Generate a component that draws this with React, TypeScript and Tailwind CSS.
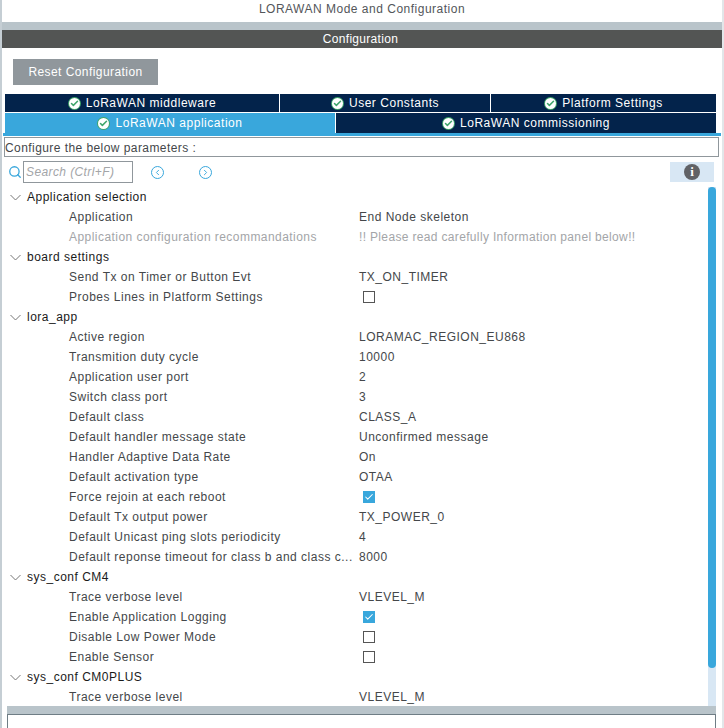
import { Check, ChevronLeft, ChevronRight, Search } from "lucide-react";

type Row =
  | { kind: "group"; label: string }
  | { kind: "text"; label: string; value: string; muted?: boolean }
  | { kind: "check"; label: string; checked: boolean };

const ROWS: Row[] = [
  { kind: "group", label: "Application selection" },
  { kind: "text", label: "Application", value: "End Node skeleton" },
  { kind: "text", label: "Application configuration recommandations", value: "!! Please read carefully Information panel below!!", muted: true },
  { kind: "group", label: "board settings" },
  { kind: "text", label: "Send Tx on Timer or Button Evt", value: "TX_ON_TIMER" },
  { kind: "check", label: "Probes Lines in Platform Settings", checked: false },
  { kind: "group", label: "lora_app" },
  { kind: "text", label: "Active region", value: "LORAMAC_REGION_EU868" },
  { kind: "text", label: "Transmition duty cycle", value: "10000" },
  { kind: "text", label: "Application user port", value: "2" },
  { kind: "text", label: "Switch class port", value: "3" },
  { kind: "text", label: "Default class", value: "CLASS_A" },
  { kind: "text", label: "Default handler message state", value: "Unconfirmed message" },
  { kind: "text", label: "Handler Adaptive Data Rate", value: "On" },
  { kind: "text", label: "Default activation type", value: "OTAA" },
  { kind: "check", label: "Force rejoin at each reboot", checked: true },
  { kind: "text", label: "Default Tx output power", value: "TX_POWER_0" },
  { kind: "text", label: "Default Unicast ping slots periodicity", value: "4" },
  { kind: "text", label: "Default reponse timeout for class b and class c...", value: "8000" },
  { kind: "group", label: "sys_conf CM4" },
  { kind: "text", label: "Trace verbose level", value: "VLEVEL_M" },
  { kind: "check", label: "Enable Application Logging", checked: true },
  { kind: "check", label: "Disable Low Power Mode", checked: false },
  { kind: "check", label: "Enable Sensor", checked: false },
  { kind: "group", label: "sys_conf CM0PLUS" },
  { kind: "text", label: "Trace verbose level", value: "VLEVEL_M" },
];

function OkBadge() {
  return (
    <span className="w-[13px] h-[13px] rounded-full bg-[#3fa66b] flex items-center justify-center shrink-0">
      <span className="w-[11px] h-[11px] rounded-full bg-white flex items-center justify-center">
        <Check className="w-[9px] h-[9px] text-[#3fa66b]" strokeWidth={4} />
      </span>
    </span>
  );
}

function Tab({ label, width, active }: { label: string; width: string; active?: boolean }) {
  return (
    <div className={`${width} h-full flex items-center justify-center gap-[5px] text-white tracking-[0.53px] ${active ? "bg-[#39a7dc]" : "bg-[#03234b]"}`}>
      <OkBadge />
      <span>{label}</span>
    </div>
  );
}

function Box({ checked }: { checked: boolean }) {
  if (checked) {
    return (
      <span className="ml-[4px] w-[12px] h-[12px] bg-[#39a7dc] flex items-center justify-center">
        <Check className="w-[10px] h-[10px] text-white" strokeWidth={2.5} />
      </span>
    );
  }
  return <span className="ml-[4px] w-[12px] h-[12px] border border-[#555]" />;
}

function ParamRow({ row }: { row: Row }) {
  if (row.kind === "group") {
    return (
      <div className="h-[20px] flex items-center text-[#1a1a1a]">
        <svg className="ml-[8px] w-[11px] h-[7px]" viewBox="0 0 11 7" fill="none" stroke="#777" strokeWidth="1">
          <polyline points="0.5,1 5.5,6 10.5,1" />
        </svg>
        <span className="ml-[6px] pb-[1px]">{row.label}</span>
      </div>
    );
  }
  const muted = row.kind === "text" && row.muted;
  return (
    <div className={`h-[20px] flex items-center ${muted ? "text-[#a3a5a8]" : "text-[#44474a]"}`}>
      <span className={`ml-[67px] w-[290px] shrink-0 whitespace-nowrap pb-[1px] ${muted ? "tracking-[0.45px]" : ""}`}>{row.label}</span>
      {row.kind === "text" ? (
        <span className={`pb-[1px] ${muted ? "tracking-[0.34px]" : ""}`}>{row.value}</span>
      ) : (
        <Box checked={row.checked} />
      )}
    </div>
  );
}

export default function App() {
  return (
    <div className="relative w-[724px] h-[728px] overflow-hidden bg-white flex flex-col text-[12px] tracking-[0.5px] border-l-2 border-l-[#c5ced4] border-r-2 border-r-[#e2e6e9] box-border" style={{ fontFamily: '"Liberation Sans", Arial, sans-serif' }}>
      <div className="h-[22px] shrink-0 flex items-center justify-center text-[#53565a] pb-[6px] pt-[2px]">LORAWAN Mode and Configuration</div>
      <div className="h-[8px] shrink-0 bg-[#b9c4ca]" />
      <div className="h-[18px] shrink-0 bg-[#535554] text-white flex items-center justify-center pr-[3px] tracking-[0.3px]">Configuration</div>

      <div className="mt-[11px] ml-[11px] w-[145px] h-[26px] shrink-0 bg-[#90979c] text-white flex items-center justify-center tracking-[0.43px]">Reset Configuration</div>

      <div className="mt-[9px] ml-[3px] w-[711px] h-[18px] shrink-0 flex gap-[1px]">
        <Tab label="LoRaWAN middleware" width="w-[274px]" />
        <Tab label="User Constants" width="w-[210px]" />
        <Tab label="Platform Settings" width="w-[225px]" />
      </div>
      <div className="mt-[1px] ml-[3px] w-[711px] h-[20px] shrink-0 flex gap-[1px]">
        <Tab label="LoRaWAN application" width="w-[330px]" active />
        <Tab label="LoRaWAN commissioning" width="w-[380px]" />
      </div>
      <div className="ml-[1px] w-[718px] h-[3px] shrink-0 bg-[#39a7dc]" />

      <div className="mt-[1px] ml-[2px] w-[715px] h-[20px] shrink-0 border border-[#90979c] flex items-center pt-[1px] text-[#44474a] tracking-[0.43px]">Configure the below parameters :</div>

      <div className="mt-[4px] h-[22px] shrink-0 flex items-center">
        <Search className="ml-[6px] w-[14px] h-[14px] text-[#39a7dc]" strokeWidth={2.25} />
        <div className="ml-[1px] w-[110px] h-[22px] border border-[#90979c] flex items-center pl-[2px] italic text-[#a3a5a8] tracking-[0.4px]">Search (Ctrl+F)</div>
        <span className="ml-[18px] w-[13px] h-[13px] rounded-full border border-[#39a7dc] flex items-center justify-center">
          <ChevronLeft className="w-[9px] h-[9px] text-[#39a7dc]" strokeWidth={2.5} />
        </span>
        <span className="ml-[35px] w-[13px] h-[13px] rounded-full border border-[#39a7dc] flex items-center justify-center">
          <ChevronRight className="w-[9px] h-[9px] text-[#39a7dc]" strokeWidth={2.5} />
        </span>
        <div className="ml-[458px] w-[44px] h-[20px] bg-[#d8e7f4] flex items-center justify-center">
          <span className="w-[16px] h-[16px] rounded-full bg-[#616266] text-white flex items-center justify-center font-bold text-[13px] tracking-normal" style={{ fontFamily: '"Liberation Serif", serif' }}>i</span>
        </div>
      </div>

      <div className="mt-[4px] h-[519px] shrink-0 overflow-hidden relative">
        {ROWS.map((row, i) => (
          <ParamRow key={i} row={row} />
        ))}
        {/* scrollbar */}
        <div className="absolute left-[706px] top-0 bottom-0 w-[8px] bg-[#d8e7f4]">
          <div className="h-[481px] bg-[#39a7dc] rounded-full" />
        </div>
      </div>

      <div className="h-[8px] shrink-0 bg-[#b9c4ca] ml-[5px] w-[709px]" />
      <div className="flex-1 ml-[5px] w-[709px] border border-[#6f7d85] border-b-0 bg-white" />

      {/* outer window scrollbar thumb */}
      <div className="absolute -right-[2px] top-[10px] w-[2px] h-[13px] bg-[#777]" />
    </div>
  );
}
